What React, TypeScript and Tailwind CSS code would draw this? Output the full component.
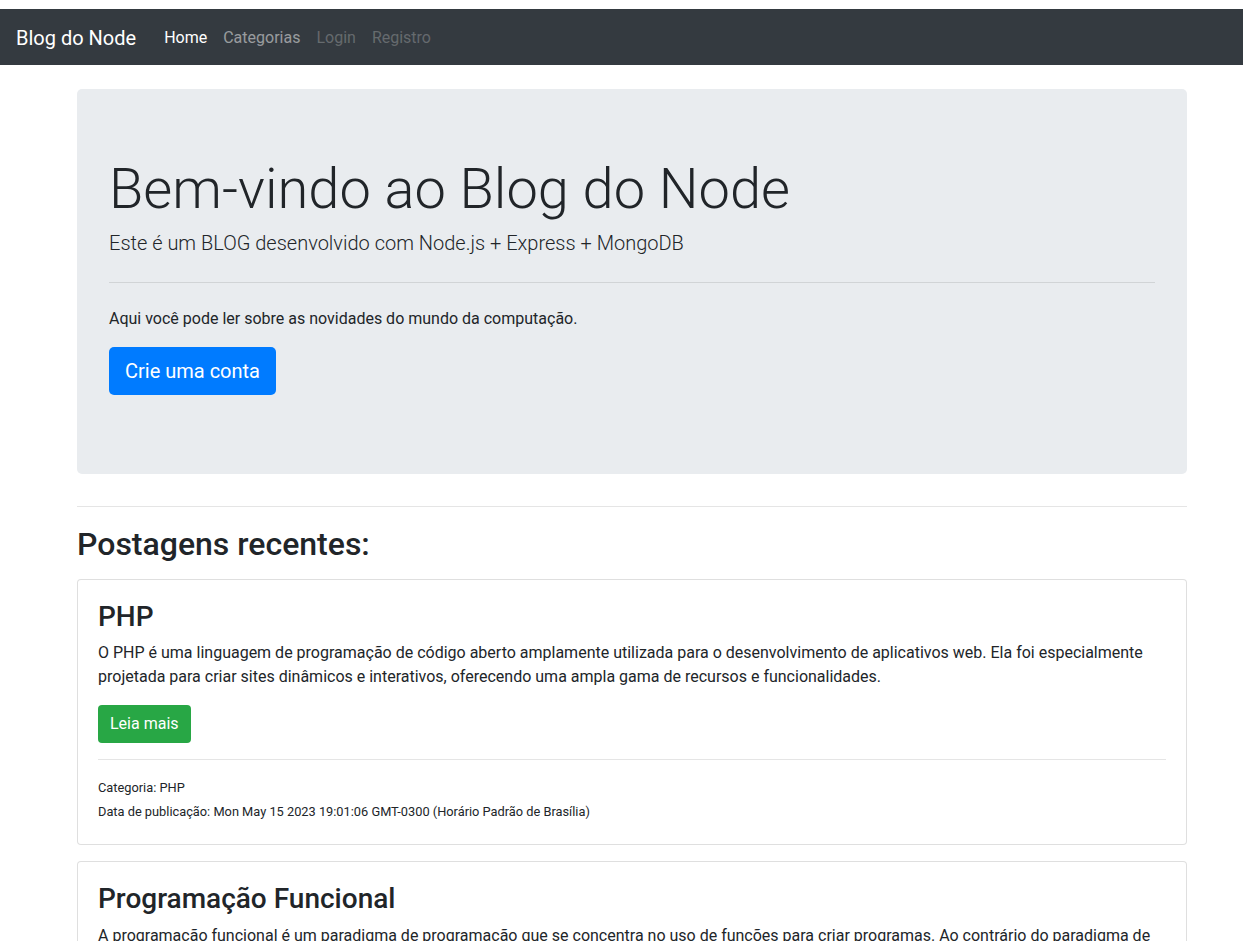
import React from 'react';

const navItems = [
    { label: 'Home', cls: 'text-white' },
    { label: 'Categorias', cls: 'text-white/50' },
    { label: 'Login', cls: 'text-white/25' },
    { label: 'Registro', cls: 'text-white/25' },
];

const posts = [
    {
        title: 'PHP',
        text: 'O PHP é uma linguagem de programação de código aberto amplamente utilizada para o desenvolvimento de aplicativos web. Ela foi especialmente projetada para criar sites dinâmicos e interativos, oferecendo uma ampla gama de recursos e funcionalidades.',
        category: 'PHP',
        date: 'Mon May 15 2023 19:01:06 GMT-0300 (Horário Padrão de Brasília)',
    },
    {
        title: 'Programação Funcional',
        text: 'A programação funcional é um paradigma de programação que se concentra no uso de funções para criar programas. Ao contrário do paradigma de programação imperativa, que se baseia em instruções que alteram o estado do programa, a programação funcional trata a computação como a avaliação de funções matemáticas.',
        category: 'Programação',
        date: 'Mon May 15 2023 19:05:42 GMT-0300 (Horário Padrão de Brasília)',
    },
];

export default function App() {
    return (
        <div className="min-h-screen bg-white pt-[9px] text-[#212529] font-['Roboto',sans-serif]">
            <nav className="flex items-center h-14 px-4 bg-[#343a40]">
                <span className="text-xl leading-[30px] text-white mr-5 pt-px">Blog do Node</span>
                <ul className="flex pt-px">
                    {navItems.map((item) => (
                        <li key={item.label} className={`px-2 text-base leading-6 ${item.cls}`}>
                            {item.label}
                        </li>
                    ))}
                </ul>
            </nav>

            <div className="w-[1110px] ml-[77px]">
                <div className="mt-6 rounded-[5px] bg-[#e9ecef] px-8 pt-16 pb-[63px]">
                    <h1 className="text-[56px] font-light leading-[1.2] mb-2 pt-[3px]">Bem-vindo ao Blog do Node</h1>
                    <p className="text-xl font-light leading-[30px] -mt-[3px]">
                        Este é um BLOG desenvolvido com Node.js + Express + MongoDB
                    </p>
                    <hr className="my-6 border-t border-black/10" />
                    <p className="text-base leading-6 mb-4">Aqui você pode ler sobre as novidades do mundo da computação.</p>
                    <div className="mb-4">
                        <button className="h-12 px-4 rounded-[5px] bg-[#007bff] text-white text-xl leading-[30px]">
                            Crie uma conta
                        </button>
                    </div>
                </div>

                <hr className="mt-8 mb-[18px] border-t border-black/10" />

                <h2 className="mb-[15px] text-[32px] font-medium leading-[1.2]">Postagens recentes:</h2>

                {posts.map((post) => (
                    <div key={post.title} className="mb-4 rounded border border-black/[0.125] bg-white p-5">
                        <h3 className="text-[28px] font-medium leading-[1.2] mb-2">{post.title}</h3>
                        <p className="text-base leading-6 mb-4">{post.text}</p>
                        <button className="h-[38px] px-3 rounded bg-[#28a745] text-white text-base leading-6">
                            Leia mais
                        </button>
                        <hr className="my-4 border-t border-black/10" />
                        <p className="text-[12.8px] leading-6">
                            Categoria: {post.category}
                            <br />
                            Data de publicação: {post.date}
                        </p>
                    </div>
                ))}
            </div>
        </div>
    );
}
